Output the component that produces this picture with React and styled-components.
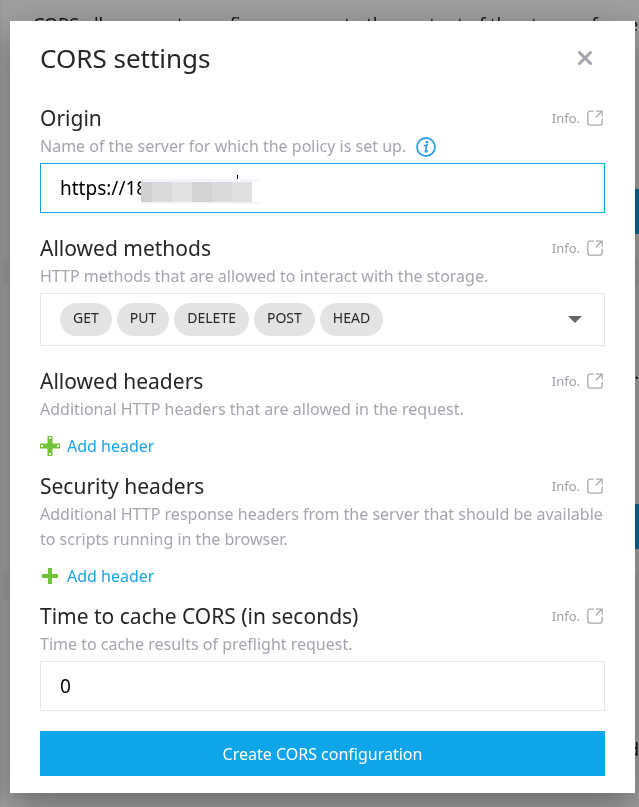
import React, { useState } from 'react';
import styled, { createGlobalStyle } from 'styled-components';

const METHODS = ['GET', 'PUT', 'DELETE', 'POST', 'HEAD'];
const MASK = ['#d0d0d0', '#dadada', '#e2e2e2', '#d3d3d3', '#dadada', '#e0e0e0'];

const ExternalIcon = () => (
    <svg width="16" height="16" viewBox="0 0 16 16" fill="none" stroke="#a9a9b2" strokeWidth="1.3" aria-hidden="true">
        <path d="M6.8 1.2H3.2Q.8 1.2 .8 3.6V12.8Q.8 15.2 3.2 15.2H12.8Q15.2 15.2 15.2 12.8V8.8" />
        <path d="M8.8 7.2 14.8 1.2M9 1.2H15.2V6.6" />
    </svg>
);

const InfoIcon = () => (
    <svg width="20" height="20" viewBox="0 0 20 20" fill="none" aria-hidden="true">
        <circle cx="10" cy="10" r="9" stroke="#2ba1e6" strokeWidth="1.8" />
        <circle cx="11" cy="5.2" r="1.4" fill="#2ba1e6" />
        <path d="M7.8 8.7Q9.6 8.5 10.9 8L9.4 14Q9.2 15.3 10.2 14.8L11.8 13.6" stroke="#2ba1e6" strokeWidth="1.7" />
    </svg>
);

const CloseIcon = () => (
    <svg width="16" height="16" viewBox="0 0 16 16" fill="none" aria-hidden="true">
        <path d="M2.5 2.5 13.5 13.5M13.5 2.5 2.5 13.5" stroke="#a3a3ad" strokeWidth="3" strokeLinecap="round" />
    </svg>
);

const PlusIcon = ({ active }) => (
    <svg width="20" height="20" viewBox="0 0 20 20" fill="#71c337" aria-hidden="true">
        {active ? (
            <>
                <path d="M7.5 0H12.5V7.5H20V12.5H12.5V20H7.5V12.5H0V7.5H7.5Z" />
                <path d="M9 1H11V3H9ZM9 17H11V19H9ZM1 9H3V11H1ZM17 9H19V11H17Z" fill="#fff" />
            </>
        ) : (
            <path d="M8 2H12V8H18V12H12V18H8V12H2V8H8Z" />
        )}
    </svg>
);

const SectionTitle = ({ children, htmlFor, id }) => (
    <TitleRow>
        <Heading id={id}>
            {htmlFor ? <label htmlFor={htmlFor}>{children}</label> : children}
        </Heading>
        <InfoLink href="#info">
            Info.
            <ExternalIcon />
        </InfoLink>
    </TitleRow>
);

const PageBehind = () => (
    <Page aria-hidden="true">
        <PageCard $height={259}>
            <PageText>CORS allows you to configure access to the content of the storage for re</PageText>
            <PageAction $gap={152} />
        </PageCard>
        <PageCard $height={290}>
            <PageTextEnd $gap={64}>.</PageTextEnd>
            <PageAction $gap={119} />
        </PageCard>
        <PageCard $height={240}>
            <PageTextEnd $gap={126}>d</PageTextEnd>
        </PageCard>
    </Page>
);

const App = () => {
    const [origin, setOrigin] = useState('https://18');
    const [cacheTime, setCacheTime] = useState('0');

    return (
        <>
            <GlobalStyle />
            <PageBehind />
            <Overlay>
                <Dialog role="dialog" aria-modal="true" aria-labelledby="dialog-title">
                    <DialogHeader>
                        <DialogTitle id="dialog-title">CORS settings</DialogTitle>
                        <CloseButton type="button" aria-label="Close">
                            <CloseIcon />
                        </CloseButton>
                    </DialogHeader>

                    <Section>
                        <SectionTitle htmlFor="origin">Origin</SectionTitle>
                        <Description>
                            Name of the server for which the policy is set up.
                            <InfoIcon />
                        </Description>
                        <Field>
                            <TextInput
                                id="origin"
                                $focused
                                value={origin}
                                onChange={e => setOrigin(e.target.value)}
                            />
                            <Mask aria-hidden="true">
                                {MASK.map((color, i) => (
                                    <MaskBlock key={i} $color={color} $narrow={i === 0} />
                                ))}
                            </Mask>
                        </Field>
                    </Section>

                    <Section>
                        <SectionTitle id="methods">Allowed methods</SectionTitle>
                        <Description>HTTP methods that are allowed to interact with the storage.</Description>
                        <MethodSelect type="button" aria-haspopup="listbox" aria-labelledby="methods">
                            <Chips>
                                {METHODS.map(method => (
                                    <Chip key={method}>{method}</Chip>
                                ))}
                            </Chips>
                            <Arrow />
                        </MethodSelect>
                    </Section>

                    <Section $tight>
                        <SectionTitle>Allowed headers</SectionTitle>
                        <Description>Additional HTTP headers that are allowed in the request.</Description>
                        <AddButton type="button">
                            <PlusIcon active />
                            Add header
                        </AddButton>
                    </Section>

                    <Section $tight>
                        <SectionTitle>Security headers</SectionTitle>
                        <Description>
                            Additional HTTP response headers from the server that should be available to scripts
                            running in the browser.
                        </Description>
                        <AddButton type="button">
                            <PlusIcon />
                            Add header
                        </AddButton>
                    </Section>

                    <Section>
                        <SectionTitle htmlFor="cache-time">Time to cache CORS (in seconds)</SectionTitle>
                        <Description>Time to cache results of preflight request.</Description>
                        <Field>
                            <TextInput
                                id="cache-time"
                                value={cacheTime}
                                onChange={e => setCacheTime(e.target.value)}
                            />
                        </Field>
                    </Section>

                    <SubmitButton type="submit">Create CORS configuration</SubmitButton>
                </Dialog>
            </Overlay>
        </>
    );
};

export default App;

const GlobalStyle = createGlobalStyle`
    * {
        box-sizing: border-box;
    }
    body {
        margin: 0;
        overflow: hidden;
        background: #f8f5f3;
        color: #262626;
        font-family: "Noto Sans", "Open Sans", sans-serif;
    }
    button, input {
        font-family: inherit;
    }
    svg {
        flex: none;
    }
`

const Page = styled.div`
    position: fixed;
    inset: 0;
    overflow: hidden;
    display: flex;
    flex-direction: column;
    gap: 25px;
    padding-left: 3px;
`

const PageCard = styled.div`
    flex: none;
    display: flex;
    flex-direction: column;
    align-items: flex-end;
    height: ${props => props.$height}px;
    padding: 12px 0 0 30px;
    background: #fcfdff;
`

const PageText = styled.div`
    align-self: flex-start;
    font-size: 18px;
    line-height: 25px;
    white-space: nowrap;
`

const PageTextEnd = styled.div`
    margin-top: ${props => props.$gap}px;
    font-size: 18px;
    line-height: 25px;
`

const PageAction = styled.div`
    width: 30px;
    height: 45px;
    margin-top: ${props => props.$gap}px;
    background: #0fa5e9;
`

const Overlay = styled.div`
    position: fixed;
    inset: 0;
    overflow: auto;
    padding: 21px 4px 14px 10px;
    background: rgba(0, 0, 0, 0.37);
`

const Dialog = styled.form`
    padding: 17px 30px 17px;
    background: #fff;
    box-shadow: 0 12px 36px rgba(0, 0, 0, 0.35);
`

const DialogHeader = styled.div`
    display: flex;
    align-items: center;
    justify-content: space-between;
    margin-bottom: 25px;
`

const DialogTitle = styled.h2`
    margin: 0;
    font-size: 26px;
    font-weight: 400;
    line-height: 40px;
`

const CloseButton = styled.button`
    display: flex;
    padding: 12px;
    border: 0;
    background: none;
    cursor: pointer;
`

const Section = styled.section`
    margin-bottom: ${props => (props.$tight ? 10 : 20)}px;
`

const TitleRow = styled.div`
    display: flex;
    align-items: center;
    justify-content: space-between;
`

const Heading = styled.h3`
    margin: 0;
    font-size: 21px;
    font-weight: 400;
    line-height: 30px;
`

const InfoLink = styled.a`
    display: flex;
    align-items: center;
    gap: 7px;
    padding-right: 2px;
    color: #a0a0a9;
    font-size: 13px;
    line-height: 20px;
    text-decoration: none;
`

const Description = styled.p`
    display: flex;
    align-items: center;
    gap: 10px;
    margin: 1px 0 0;
    color: #a5a5ae;
    font-size: 16px;
    line-height: 25px;
`

const Field = styled.div`
    position: relative;
    margin-top: 4px;
`

const TextInput = styled.input`
    display: block;
    width: 100%;
    height: 50px;
    padding: 0 19px;
    border: 1px solid ${props => (props.$focused ? '#0fa5e9' : '#e6e6e6')};
    border-radius: 0;
    outline: 0;
    background: #fff;
    color: #000;
    font-size: 19px;
`

const Mask = styled.div`
    position: absolute;
    top: 16px;
    left: 101px;
    display: flex;
    width: 119px;
    height: 25px;
    border-top: 3px solid #f2f6fa;
    border-bottom: 2px solid #f2f6fa;
    background: #fff;
    &:before {
        content: '';
        position: absolute;
        top: -7px;
        left: 96px;
        width: 1px;
        height: 4px;
        background: #000;
    }
`

const MaskBlock = styled.span`
    width: ${props => (props.$narrow ? 11 : 20)}px;
    height: 20px;
    background: ${props => props.$color};
`

const MethodSelect = styled.button`
    display: flex;
    align-items: center;
    justify-content: space-between;
    width: 100%;
    margin-top: 4px;
    padding: 9px 22px 9px 19px;
    border: 1px solid #e6e6e6;
    background: #fff;
    cursor: pointer;
`

const Chips = styled.span`
    display: flex;
    gap: 5px;
`

const Chip = styled.span`
    padding: 5px 13px 8px;
    border-radius: 17px;
    background: #e3e3e3;
    color: #262626;
    font-size: 14px;
    line-height: 20px;
`

const Arrow = styled.span`
    border: 7px solid transparent;
    border-top-color: #666;
    border-bottom: 0;
`

const AddButton = styled.button`
    display: flex;
    align-items: center;
    gap: 7px;
    margin-top: 9px;
    padding: 0;
    border: 0;
    background: none;
    color: #16a5e8;
    font-size: 16px;
    line-height: 30px;
    cursor: pointer;
`

const SubmitButton = styled.button`
    display: block;
    width: 100%;
    height: 45px;
    border: 0;
    background: #0fa5e9;
    color: #fff;
    font-size: 16px;
    cursor: pointer;
`
